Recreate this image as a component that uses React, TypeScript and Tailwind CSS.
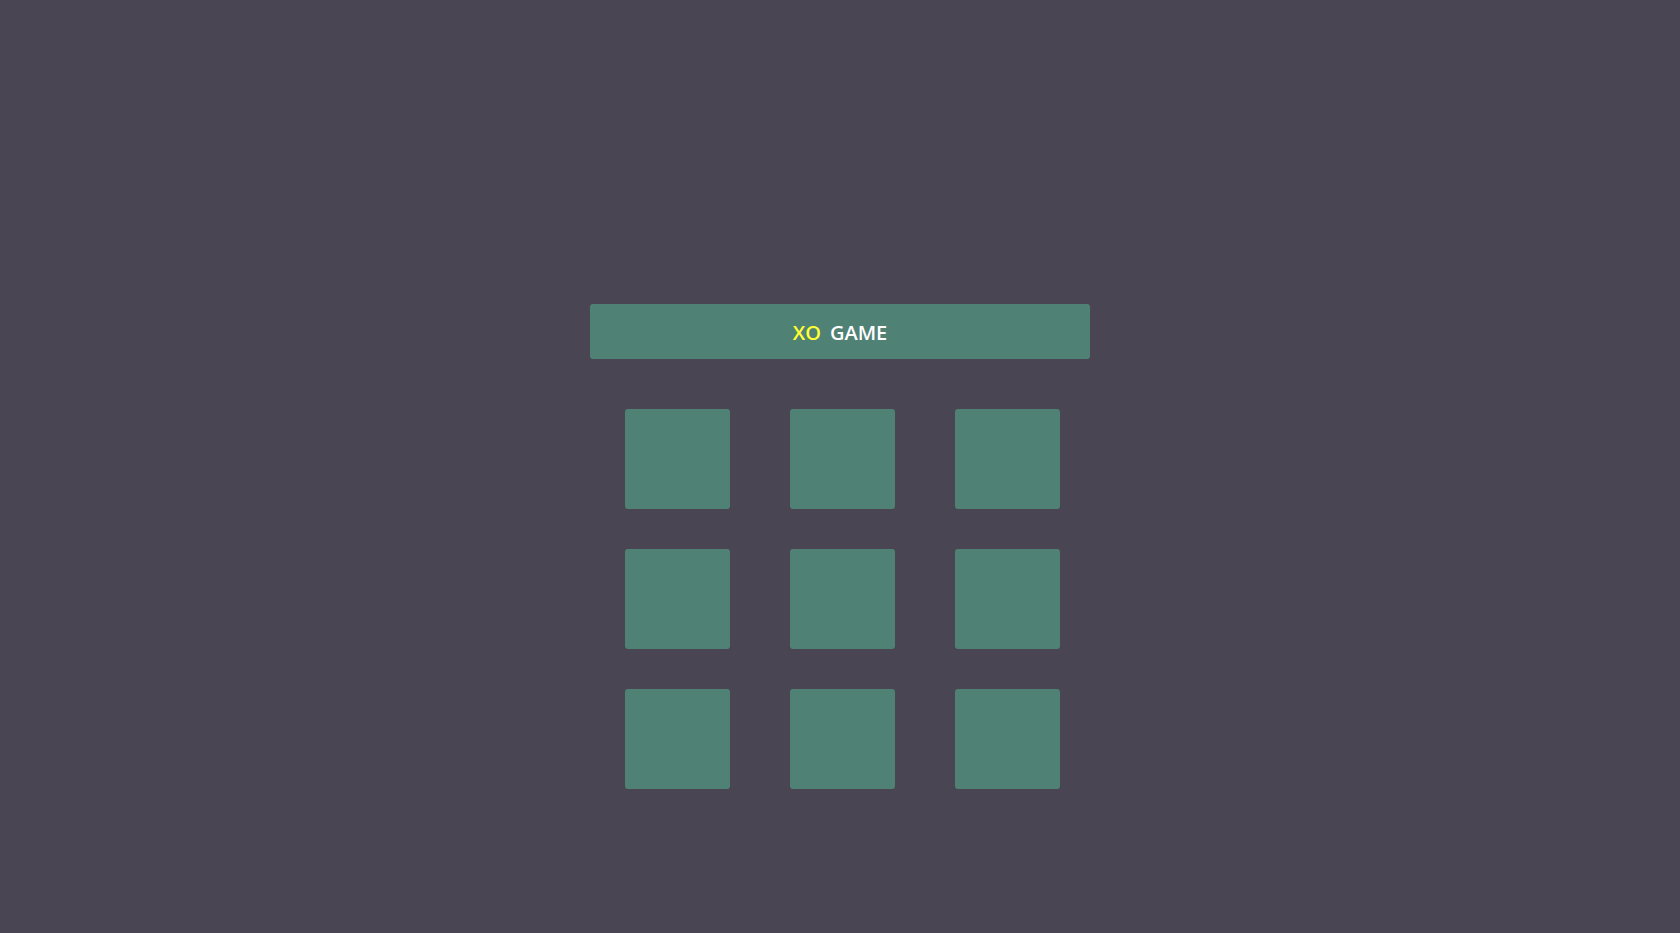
const cells = Array.from({ length: 9 });

const App = () => {
  return (
    <div className="min-h-screen w-full bg-[#4a4553] pt-[304px] font-['Open_Sans','Noto_Sans',sans-serif]">
      <div className="mx-auto w-[500px]">
        {/* Title bar */}
        <div className="flex h-[55px] items-center justify-center gap-[9px] rounded-[3px] bg-[#4f8175] pt-[3px] text-[20px] font-semibold">
          <span className="text-[#ffff33]">XO</span>
          <span className="text-white">GAME</span>
        </div>

        {/* Board */}
        <div className="mt-[50px] grid grid-cols-[repeat(3,105px)] gap-x-[60px] gap-y-[40px] pl-[35px]">
          {cells.map((_, i) => (
            <button
              key={i}
              className="h-[100px] w-[105px] rounded-[3px] bg-[#4f8175]"
            />
          ))}
        </div>
      </div>
    </div>
  );
};

export default App;
